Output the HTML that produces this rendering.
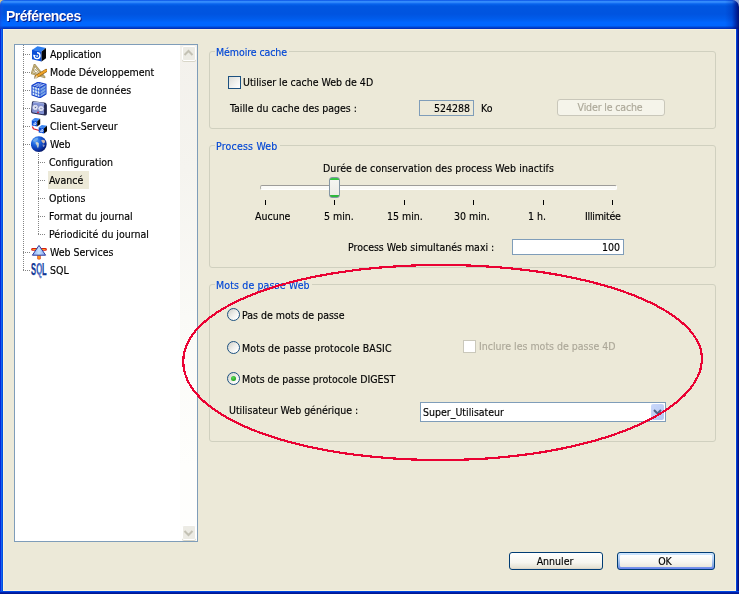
<!DOCTYPE html>
<html lang="fr">
<head>
<meta charset="utf-8">
<title>Préférences</title>
<style>
html,body{margin:0;padding:0;}
body{width:739px;height:594px;overflow:hidden;background:#ECE9D8;position:relative;
  font-family:"DejaVu Sans Condensed","Liberation Sans",sans-serif;font-size:10.5px;color:#000;line-height:13px;}
.abs{position:absolute;}
.t,.row,.gl,.btn span,#ttext{will-change:transform;}
.t,.row,.gl,.btn span{-webkit-text-stroke:0.15px currentColor;}
.t{position:absolute;white-space:pre;height:13px;line-height:13px;letter-spacing:0;}
/* window frame */
#title{left:0;top:0;width:739px;height:29px;
  background:linear-gradient(to bottom,#0043E0 0px,#2A82F8 1px,#3E96FF 2px,#1C74F5 3px,#0663EC 4.2px,#0056E0 6px,#0054E0 14px,#005CEC 19px,#0066FF 22.5px,#0066FF 25.5px,#0052E2 26.8px,#0036C2 28px,#002EB6 29px);}
#ttext{left:5.5px;top:8px;font-family:"Liberation Sans",sans-serif;font-weight:bold;font-size:14px;line-height:16px;height:16px;color:#fff;
  text-shadow:1px 1px 0 #0A1883;letter-spacing:-0.5px;white-space:pre;}
#bl{left:0;top:29px;width:3px;height:565px;background:linear-gradient(to right,#0828D8 0,#0828D8 1px,#1565F0 1px,#1565F0 2px,#0050E0 2px);}
#br{left:736px;top:29px;width:3px;height:565px;background:linear-gradient(to right,#0040D8 0,#0040D8 1px,#0020A8 1px,#0020A8 2px,#001080 2px);}
#bb{left:0;top:591px;width:739px;height:3px;background:linear-gradient(to bottom,#0048E0 0,#0048E0 1px,#0020B0 1px,#0020B0 2px,#001890 2px);}
#hl{left:3px;top:29px;width:733px;height:562px;box-sizing:border-box;border:1px solid #FBF3DC;border-top-color:#F8F0DA;}
/* tree */
#tree{left:14px;top:44px;width:184px;height:498px;box-sizing:border-box;border:1px solid #7F9DB9;background:#fff;}
#sb{left:180px;top:45px;width:17px;height:496px;background:linear-gradient(to bottom,#F3F1EC 0,#F5F4EF 25%,#FAFAF7 55%,#FEFEFC 85%,#FEFEFD 100%);}
.sbtn{left:182px;width:14px;height:15px;box-sizing:border-box;background:#ECEBE4;border:1px solid #fff;border-radius:2px;box-shadow:0 1px 0 #D8D6C8;}
.row{position:absolute;left:50px;white-space:pre;height:13px;line-height:13px;letter-spacing:0;}
.sub{left:49px;}
.hd{position:absolute;height:1px;background-image:linear-gradient(to right,#848484 50%,transparent 50%);background-size:2px 1px;}
.vd{position:absolute;width:1px;background-image:linear-gradient(to bottom,#848484 50%,transparent 50%);background-size:1px 2px;}
/* group boxes */
.grp{position:absolute;box-sizing:border-box;border:1px solid #D0D0BF;border-radius:3px;}
.gl{position:absolute;white-space:pre;color:#0046D5;background:#ECE9D8;padding:0 2px 0 1px;height:13px;line-height:13px;letter-spacing:0;}
.cb{position:absolute;width:13px;height:13px;box-sizing:border-box;border:1px solid #1C5180;background:linear-gradient(135deg,#DCDCD7,#F3F3F0 60%,#fff);}
.cbd{border-color:#CAC8BB;background:#fff;}
.rb{position:absolute;width:13px;height:13px;box-sizing:border-box;border:1px solid #1C5180;border-radius:50%;background:linear-gradient(135deg,#D4D4CE 10%,#ECECE8 45%,#FDFDFC 80%);}
.fld{position:absolute;box-sizing:border-box;border:1px solid #7F9DB9;background:#fff;}
.dis{color:#ACA899;}
.btn{position:absolute;box-sizing:border-box;border:1px solid #003C74;border-radius:3px;height:18px;text-align:center;
  background:linear-gradient(to bottom,#fff 0,#F6F5EF 60%,#E6E3D6 90%,#D6D0C5);}
.btn span{display:block;line-height:16px;letter-spacing:0;padding-right:2px;}
</style>
</head>
<body>
<!-- window chrome -->
<div class="abs" id="title"></div>
<div class="abs" id="ttext">Préférences</div>
<div class="abs" id="hl"></div>
<div class="abs" id="bl"></div>
<div class="abs" id="br"></div>
<div class="abs" id="bb"></div>
<div class="abs" style="left:725px;top:0;width:14px;height:29px;background:linear-gradient(to right,rgba(0,20,140,0) 0,rgba(0,24,150,0.25) 7px,rgba(0,20,140,0.75) 11px,rgba(0,12,110,0.95) 14px)"></div>
<div class="abs" style="left:0;top:0;width:4px;height:29px;background:linear-gradient(to right,rgba(30,70,215,0.55),rgba(30,90,230,0.25) 50%,rgba(0,40,190,0))"></div>
<svg class="abs" style="left:0;top:0" width="739" height="8">
  <path d="M0 0H5Q0 0 0 5Z" fill="#D8C48A"/>
  <path d="M739 0H732A7 7 0 0 1 739 7Z" fill="#8FA4DA"/>
</svg>

<!-- tree panel -->
<div class="abs" id="tree"></div>
<div class="abs" id="sb"></div>
<div class="abs sbtn" style="top:46px"></div>
<div class="abs sbtn" style="top:525px"></div>
<svg class="abs" style="left:181px;top:45px" width="15" height="16"><path d="M3.5 10L7.5 6L11.5 10" fill="none" stroke="#C3C1B4" stroke-width="2"/></svg>
<svg class="abs" style="left:181px;top:525px" width="15" height="16"><path d="M3.5 6L7.5 10L11.5 6" fill="none" stroke="#C3C1B4" stroke-width="2"/></svg>

<div class="vd" style="left:23px;top:45px;height:226px"></div>
<div class="vd" style="left:38px;top:153px;height:82px"></div>
<div class="hd" style="left:23px;top:54px;width:8px"></div>
<div class="hd" style="left:23px;top:72px;width:8px"></div>
<div class="hd" style="left:23px;top:90px;width:8px"></div>
<div class="hd" style="left:23px;top:108px;width:8px"></div>
<div class="hd" style="left:23px;top:126px;width:8px"></div>
<div class="hd" style="left:23px;top:144px;width:8px"></div>
<div class="hd" style="left:23px;top:252px;width:8px"></div>
<div class="hd" style="left:23px;top:270px;width:8px"></div>
<div class="hd" style="left:38px;top:162px;width:8px"></div>
<div class="hd" style="left:38px;top:180px;width:8px"></div>
<div class="hd" style="left:38px;top:198px;width:8px"></div>
<div class="hd" style="left:38px;top:216px;width:8px"></div>
<div class="hd" style="left:38px;top:234px;width:8px"></div>


<!-- tree icons -->
<svg class="abs" style="left:31px;top:46px" width="16" height="16" viewBox="0 0 16 16">
  <polygon points="1,4 6.5,0.3 15,2 10.5,5.6" fill="#2E7FF0"/>
  <polygon points="1,3.8 10.6,5.5 10.6,15.6 1,13.2" fill="#0B4FD8"/>
  <polygon points="10.6,5.5 15,2 15,12.2 10.6,15.6" fill="#050608"/>
  <path d="M3.2 10A2.9 2.9 0 1 0 6 6.8" fill="none" stroke="#fff" stroke-width="1.4"/>
  <path d="M1.8 8.8L4.8 9L3.3 11.4Z" fill="#fff"/>
  <circle cx="6.1" cy="9.9" r="1" fill="#CFE2FF"/>
</svg>
<svg class="abs" style="left:31px;top:64px" width="16" height="16" viewBox="0 0 16 16">
  <path d="M3.6 0.9L0.9 9.3L13.4 13.1Z" fill="none" stroke="#A48F57" stroke-width="2.1" stroke-linejoin="round"/>
  <path d="M3.6 0.9L0.9 9.3L13.4 13.1Z" fill="none" stroke="#CDBB86" stroke-width="0.8" stroke-linejoin="round"/>
  <path d="M4.4 5L3.4 8.2L8.2 9.7Z" fill="none" stroke="#B9A670" stroke-width="1"/>
  <path d="M15 6.6L5.2 12.6" stroke="#8A5A14" stroke-width="3.3" stroke-linecap="round"/>
  <path d="M15 6.5L5.6 12.3" stroke="#EFA327" stroke-width="2.1" stroke-linecap="round"/>
  <path d="M5.8 11.2L2.8 14.4L6.8 13.5Z" fill="#E9D9B0"/>
  <path d="M3.9 13.2L2.8 14.4L4.4 14Z" fill="#222"/>
</svg>
<svg class="abs" style="left:31px;top:82px" width="16" height="16" viewBox="0 0 16 16">
  <polygon points="1,3.6 9,6 9,16 1,13" fill="#DCEFF9"/>
  <polygon points="9,6 15,2.4 15,12 9,16" fill="#A9D2EE"/>
  <polygon points="1,3.6 7,0 15,2.4 9,6" fill="#F2FAFE"/>
  <g fill="none" stroke="#2A58D8" stroke-width="0.75">
    <path d="M3.67 4.4V14M6.33 5.2V15M1 6.73L9 9.33M1 9.87L9 12.67"/>
    <path d="M11 4.8V14.6M13 3.6V13.3M9 9.33L15 5.6M9 12.67L15 8.8"/>
    <path d="M3.67 4.4L9.67 0.8M6.33 5.2L12.33 1.6M3 2.4L11 4.8M5 1.2L13 3.6"/>
  </g>
  <g fill="none" stroke="#1440CC" stroke-width="1.1" stroke-linejoin="round">
    <path d="M1 3.6L7 0.2L15 2.4V12L9 15.8L1 13Z"/>
    <path d="M1 3.6L9 6L15 2.4M9 6V15.8"/>
  </g>
</svg>
<svg class="abs" style="left:31px;top:100px" width="16" height="16" viewBox="0 0 16 16">
  <path d="M2.4 1.2L13 2.5Q15.9 2.9 15.9 5.6V13.6Q15.9 15.7 13.8 15.4L1.6 13.5Q-0.1 13.1 0.1 11.4L0.9 2.6Q1.1 1.1 2.4 1.2Z" fill="#23284F"/>
  <path d="M2.6 2.1L11.9 3.2Q13 3.4 13 4.7V13.3Q13 14.4 11.9 14.2L2 12.6Q1 12.4 1.1 11.3L1.7 3Q1.8 2 2.6 2.1Z" fill="#8393D6"/>
  <path d="M2.6 2.1L11.9 3.2Q13 3.4 13 4.7" fill="none" stroke="#B9C4EE" stroke-width="0.9"/>
  <circle cx="4.3" cy="7.4" r="3" fill="#F2F4FC" stroke="#5563AC" stroke-width="0.6"/>
  <circle cx="10" cy="8.6" r="3" fill="#F2F4FC" stroke="#5563AC" stroke-width="0.6"/>
  <circle cx="4.3" cy="7.4" r="1.5" fill="none" stroke="#8E9AD0" stroke-width="0.7" stroke-dasharray="0.8 0.7"/>
  <circle cx="10" cy="8.6" r="1.5" fill="none" stroke="#8E9AD0" stroke-width="0.7" stroke-dasharray="0.8 0.7"/>
  <circle cx="4.3" cy="7.4" r="0.6" fill="#39457F"/>
  <circle cx="10" cy="8.6" r="0.6" fill="#39457F"/>
  <circle cx="7" cy="12.3" r="0.9" fill="#D81830"/>
</svg>
<svg class="abs" style="left:31px;top:118px" width="16" height="16" viewBox="0 0 16 16">
  <path d="M1.4 8.6L2.4 10.8L9 12.8" fill="none" stroke="#D8202A" stroke-width="1.2"/>
  <polygon points="0.8,2.2 4,-0.2 9.2,0.8 6.2,3.2" fill="#3A86F2"/>
  <polygon points="0.8,2.2 6.2,3.2 6.2,8.6 0.8,7.4" fill="#0B4FD8"/>
  <polygon points="6.2,3.2 9.2,0.8 9.2,6.2 6.2,8.6" fill="#050608"/>
  <path d="M2.4 5.6A1.3 1.3 0 1 0 3.6 4.2" fill="none" stroke="#fff" stroke-width="0.9"/>
  <circle cx="3.7" cy="5.6" r="0.5" fill="#BFD8FF"/>
  <polygon points="7.7,9.2 10.8,6.9 16,7.8 13,10.2" fill="#3A86F2"/>
  <polygon points="7.7,9.2 13,10.2 13,15.5 7.7,14.4" fill="#0B4FD8"/>
  <polygon points="13,10.2 16,7.8 16,13.2 13,15.5" fill="#050608"/>
  <path d="M9.3 12.6A1.3 1.3 0 1 0 10.5 11.2" fill="none" stroke="#fff" stroke-width="0.9"/>
  <circle cx="10.6" cy="12.6" r="0.5" fill="#BFD8FF"/>
</svg>
<svg class="abs" style="left:31px;top:136px" width="16" height="16" viewBox="0 0 16 16">
  <defs><radialGradient id="gl" cx="32%" cy="28%" r="78%"><stop offset="0" stop-color="#5AA4F8"/><stop offset="0.4" stop-color="#1A60DC"/><stop offset="0.8" stop-color="#0A2E9E"/><stop offset="1" stop-color="#04145E"/></radialGradient></defs>
  <circle cx="7.8" cy="8.1" r="7.9" fill="url(#gl)"/>
  <path d="M1.6 5Q3 2.4 6.2 1.6Q7.6 2.4 6.8 3.8Q5.4 4 5.2 5.4Q3.6 6.4 1.6 5Z" fill="#6FA8EC"/>
  <path d="M4.6 6.2Q6.8 5.8 8 7.4Q8.2 9.4 7 12.2Q5.8 11 5.6 9Q4.2 7.8 4.6 6.2Z" fill="#B9C8CE"/>
  <path d="M5.4 6.6Q6.8 6.6 7.2 7.8Q6.6 8.8 5.8 8.4Z" fill="#D8DCD4"/>
  <path d="M10.2 4.2Q12.4 3.2 14.2 5Q14 7 12.4 7.6Q10.8 6.6 10.2 4.2Z" fill="#CDB9AE"/>
  <path d="M11.4 8.6Q13 8.2 13.8 9.6Q13.2 11.4 12 10.8Z" fill="#8B98C4"/>
</svg>
<svg class="abs" style="left:31px;top:244px" width="16" height="16" viewBox="0 0 16 16">
  <defs><linearGradient id="cone" x1="0" y1="0" x2="1" y2="0"><stop offset="0" stop-color="#86A8F4"/><stop offset="0.5" stop-color="#C6E2FF"/><stop offset="1" stop-color="#7C9CF0"/></linearGradient></defs>
  <rect x="0.2" y="4.1" width="15.6" height="2.6" rx="1.3" fill="#D81C10"/>
  <rect x="1.4" y="4.9" width="13.2" height="1" rx="0.5" fill="#FF9A1E"/>
  <rect x="6.3" y="10.6" width="3.4" height="4.9" rx="1.2" fill="#D8400C"/>
  <rect x="7.1" y="10.6" width="1.8" height="4.2" fill="#FF9A1E"/>
  <path d="M8 1.4L14.6 11.2H1.4Z" fill="url(#cone)" stroke="#2C3A9C" stroke-width="1" stroke-linejoin="round"/>
</svg>
<svg class="abs" style="left:30px;top:258px" width="18" height="22" viewBox="0 0 18 22">
  <defs><linearGradient id="sq" x1="0" y1="0" x2="1" y2="0"><stop offset="0" stop-color="#0A2A86"/><stop offset="0.42" stop-color="#2450B8"/><stop offset="0.58" stop-color="#6A8CD8"/><stop offset="0.75" stop-color="#163C9E"/><stop offset="1" stop-color="#0A2A86"/></linearGradient></defs>
  <text x="1.1" y="16.8" font-family="Liberation Sans, sans-serif" font-weight="bold" font-size="16" textLength="15.6" lengthAdjust="spacingAndGlyphs" fill="url(#sq)" stroke="#0E308E" stroke-width="0.25">SQL</text>
</svg>
<div class="abs" style="left:48px;top:171px;width:41px;height:18px;background:#ECE9D8"></div>
<div class="row" style="top:48px;letter-spacing:-0.15px">Application</div>
<div class="row" style="top:66px">Mode Développement</div>
<div class="row" style="top:84px">Base de données</div>
<div class="row" style="top:102px">Sauvegarde</div>
<div class="row" style="top:120px">Client-Serveur</div>
<div class="row" style="top:138px">Web</div>
<div class="row sub" style="top:156px">Configuration</div>
<div class="row sub" style="top:174px">Avancé</div>
<div class="row sub" style="top:192px">Options</div>
<div class="row sub" style="top:210px">Format du journal</div>
<div class="row sub" style="top:228px">Périodicité du journal</div>
<div class="row" style="top:246px">Web Services</div>
<div class="row" style="top:264px">SQL</div>

<!-- group: Mémoire cache -->
<div class="grp" style="left:209px;top:51px;width:507px;height:78px"></div>
<div class="gl" style="left:215px;top:46px;letter-spacing:-0.08px">Mémoire cache</div>
<div class="cb" style="left:228px;top:76px"></div>
<div class="t" style="left:243px;top:76px">Utiliser le cache Web de 4D</div>
<div class="t" style="left:230px;top:102px">Taille du cache des pages :</div>
<div class="fld" style="left:419px;top:100px;width:55px;height:16px;background:#ECE9D8"></div>
<div class="t" style="left:419px;top:102px;width:51px;text-align:right">524288</div>
<div class="t" style="left:481px;top:102px">Ko</div>
<div class="btn dis" style="left:557px;top:99px;width:108px;height:17px;border-color:#C9C7BA;background:#F5F4EA"><span style="line-height:15px;letter-spacing:-0.15px">Vider le cache</span></div>

<!-- group: Process Web -->
<div class="grp" style="left:209px;top:145px;width:507px;height:123px"></div>
<div class="gl" style="left:215px;top:140px;letter-spacing:0.2px">Process Web</div>
<div class="t" style="left:323px;top:162px;letter-spacing:0.085px">Durée de conservation des process Web inactifs</div>
<div class="abs" style="left:260px;top:185px;width:357px;height:5px;box-sizing:border-box;background:#FBFBF8;border:1px solid #fff;border-top-color:#9D9C99;border-left-color:#B0AFA8;border-radius:2px"></div>
<div class="abs" style="left:329px;top:177px;width:11px;height:21px;box-sizing:border-box;border:1px solid #8496A4;border-radius:3px;background:linear-gradient(to bottom,#3CCB49 0,#2EC23C 2px,#F5F5F1 2px,#EDECE6 17px,#2DB83A 17px)"></div>
<div class="abs" style="left:265px;top:200px;width:1px;height:5px;background:#000"></div>
<div class="abs" style="left:334px;top:200px;width:1px;height:5px;background:#000"></div>
<div class="abs" style="left:404px;top:200px;width:1px;height:5px;background:#000"></div>
<div class="abs" style="left:473px;top:200px;width:1px;height:5px;background:#000"></div>
<div class="abs" style="left:543px;top:200px;width:1px;height:5px;background:#000"></div>
<div class="abs" style="left:612px;top:200px;width:1px;height:5px;background:#000"></div>

<div class="t" style="left:255px;top:210px">Aucune</div>
<div class="t" style="left:324px;top:210px">5 min.</div>
<div class="t" style="left:387px;top:210px">15 min.</div>
<div class="t" style="left:454px;top:210px">30 min.</div>
<div class="t" style="left:528px;top:210px">1 h.</div>
<div class="t" style="left:585px;top:210px;letter-spacing:-0.25px">Illimitée</div>
<div class="t" style="left:348px;top:241px">Process Web simultanés maxi :</div>
<div class="fld" style="left:512px;top:239px;width:112px;height:16px"></div>
<div class="t" style="left:512px;top:241px;width:108px;text-align:right">100</div>

<!-- group: Mots de passe Web -->
<div class="grp" style="left:209px;top:284px;width:507px;height:158px"></div>
<div class="gl" style="left:215px;top:279px;letter-spacing:0.14px">Mots de passe Web</div>
<div class="rb" style="left:227px;top:308px"></div>
<div class="t" style="left:242px;top:309px">Pas de mots de passe</div>
<div class="rb" style="left:227px;top:341px"></div>
<div class="t" style="left:242px;top:342px;letter-spacing:0.11px">Mots de passe protocole BASIC</div>
<div class="cb cbd" style="left:463px;top:340px"></div>
<div class="t dis" style="left:479px;top:340px">Inclure les mots de passe 4D</div>
<div class="rb" style="left:227px;top:372px"></div>
<div class="abs" style="left:231px;top:376px;width:5px;height:5px;border-radius:50%;background:radial-gradient(circle at 40% 35%,#5BDC55,#21A121 70%,#1A8A1A)"></div>
<div class="t" style="left:242px;top:373px">Mots de passe protocole DIGEST</div>
<div class="t" style="left:229px;top:404px">Utilisateur Web générique :</div>
<div class="fld" style="left:420px;top:402px;width:246px;height:20px"></div>
<div class="t" style="left:423px;top:406px">Super_Utilisateur</div>
<div class="abs" style="left:651px;top:404px;width:13px;height:16px;border-radius:2px;background:linear-gradient(135deg,#CAD8FA,#B4C6F4)"></div>
<svg class="abs" style="left:651px;top:404px" width="13" height="16"><path d="M3 6L6.5 9.5L10 6" fill="none" stroke="#4D6185" stroke-width="2"/></svg>

<!-- buttons -->
<div class="btn" style="left:509px;top:552px;width:94px"><span>Annuler</span></div>
<div class="btn" style="left:617px;top:552px;width:98px;background:linear-gradient(to bottom,#CEE7FF 0,#BCD4F6 35%,#89ADE4 75%,#6982EE 100%)"><span style="margin:2px;line-height:12px;padding-right:2px;border-radius:1px;background:linear-gradient(to bottom,#fff 0,#F6F5EF 60%,#EAE7DC 100%)">OK</span></div>

<!-- red annotation ellipse -->
<svg class="abs" style="left:0;top:0" width="739" height="594"><path d="M183.3 361.5 L183.4 358.7 L183.6 356.1 L184.1 353.4 L184.7 350.8 L185.5 348.3 L186.4 345.7 L187.5 343.2 L188.8 340.7 L190.3 338.2 L191.9 335.7 L193.7 333.2 L195.6 330.8 L197.8 328.4 L200.1 326 L202.5 323.7 L205.1 321.4 L207.9 319.1 L210.8 316.8 L213.9 314.6 L217.1 312.4 L220.5 310.3 L224.1 308.2 L227.7 306.1 L231.6 304 L235.5 302 L239.6 300.1 L243.9 298.2 L248.3 296.3 L252.8 294.5 L257.4 292.7 L262.2 291 L267.1 289.3 L272.1 287.6 L277.2 286 L282.5 284.5 L287.8 283 L293.3 281.6 L298.9 280.2 L304.5 278.9 L310.3 277.6 L316.2 276.4 L322.1 275.3 L328.1 274.2 L334.3 273.1 L340.5 272.2 L346.8 271.3 L353.1 270.4 L359.5 269.6 L366 268.9 L372.6 268.2 L379.2 267.6 L385.9 267.1 L392.6 266.6 L399.4 266.2 L406.3 265.8 L413.2 265.5 L420.1 265.3 L427.2 265.1 L434.3 265 L441.7 265 L448.5 265 L455.3 265.1 L462.1 265.3 L468.9 265.5 L475.7 265.8 L482.4 266.2 L489.1 266.6 L495.8 267 L502.4 267.6 L509 268.2 L515.6 268.9 L522.1 269.6 L528.6 270.4 L534.9 271.2 L541.3 272.1 L547.5 273.1 L553.7 274.1 L559.8 275.2 L565.9 276.3 L571.8 277.5 L577.7 278.8 L583.4 280.1 L589.1 281.4 L594.6 282.9 L600.1 284.3 L605.4 285.8 L610.7 287.4 L615.8 289 L620.8 290.7 L625.7 292.4 L630.4 294.1 L635.1 295.9 L639.6 297.8 L643.9 299.7 L648.1 301.6 L652.2 303.5 L656.1 305.5 L659.9 307.6 L663.6 309.6 L667 311.8 L670.4 313.9 L673.5 316.1 L676.6 318.2 L679.4 320.5 L682.1 322.7 L684.6 325 L687 327.3 L689.2 329.6 L691.2 331.9 L693 334.3 L694.7 336.7 L696.2 339.1 L697.5 341.5 L698.7 343.9 L699.7 346.3 L700.5 348.7 L701.1 351.2 L701.5 353.6 L701.8 356.1 L701.9 358.5 L701.8 361.2 L701.5 363.8 L701.1 366.5 L700.5 369.1 L699.7 371.7 L698.7 374.4 L697.5 377 L696.2 379.6 L694.7 382.2 L693 384.8 L691.2 387.3 L689.2 389.9 L687 392.4 L684.6 394.9 L682.1 397.3 L679.4 399.8 L676.6 402.2 L673.6 404.6 L670.4 406.9 L667.1 409.2 L663.6 411.5 L660 413.8 L656.2 416 L652.3 418.2 L648.2 420.3 L644 422.4 L639.6 424.4 L635.1 426.4 L630.5 428.4 L625.8 430.3 L620.9 432.1 L615.9 433.9 L610.8 435.7 L605.6 437.4 L600.2 439 L594.8 440.6 L589.2 442.1 L583.6 443.6 L577.8 445 L572 446.4 L566 447.7 L560 448.9 L553.9 450.1 L547.7 451.2 L541.5 452.3 L535.1 453.3 L528.8 454.2 L522.3 455 L515.8 455.8 L509.3 456.5 L502.7 457.2 L496 457.8 L489.4 458.3 L482.7 458.8 L475.9 459.1 L469.2 459.4 L462.4 459.7 L455.6 459.9 L448.8 460 L442 460 L434.6 460 L427.5 459.9 L420.4 459.7 L413.4 459.5 L406.5 459.2 L399.7 458.8 L392.9 458.4 L386.1 457.9 L379.4 457.3 L372.8 456.7 L366.2 456 L359.7 455.3 L353.3 454.5 L346.9 453.6 L340.7 452.7 L334.4 451.7 L328.3 450.6 L322.3 449.5 L316.3 448.3 L310.4 447.1 L304.7 445.8 L299 444.5 L293.4 443.1 L288 441.6 L282.6 440.1 L277.3 438.5 L272.2 436.9 L267.2 435.2 L262.3 433.5 L257.5 431.7 L252.9 429.9 L248.4 428.1 L244 426.1 L239.7 424.2 L235.6 422.2 L231.6 420.2 L227.8 418.1 L224.1 415.9 L220.6 413.8 L217.2 411.6 L213.9 409.4 L210.8 407.1 L207.9 404.8 L205.1 402.5 L202.5 400.1 L200.1 397.7 L197.8 395.3 L195.7 392.8 L193.7 390.3 L191.9 387.8 L190.3 385.3 L188.8 382.8 L187.5 380.2 L186.4 377.6 L185.5 375 L184.7 372.4 L184.1 369.7 L183.6 367 L183.4 364.3Z" fill="none" stroke="#EA0233" stroke-width="2.2" stroke-linejoin="round" shape-rendering="crispEdges"/></svg>

</body>
</html>
